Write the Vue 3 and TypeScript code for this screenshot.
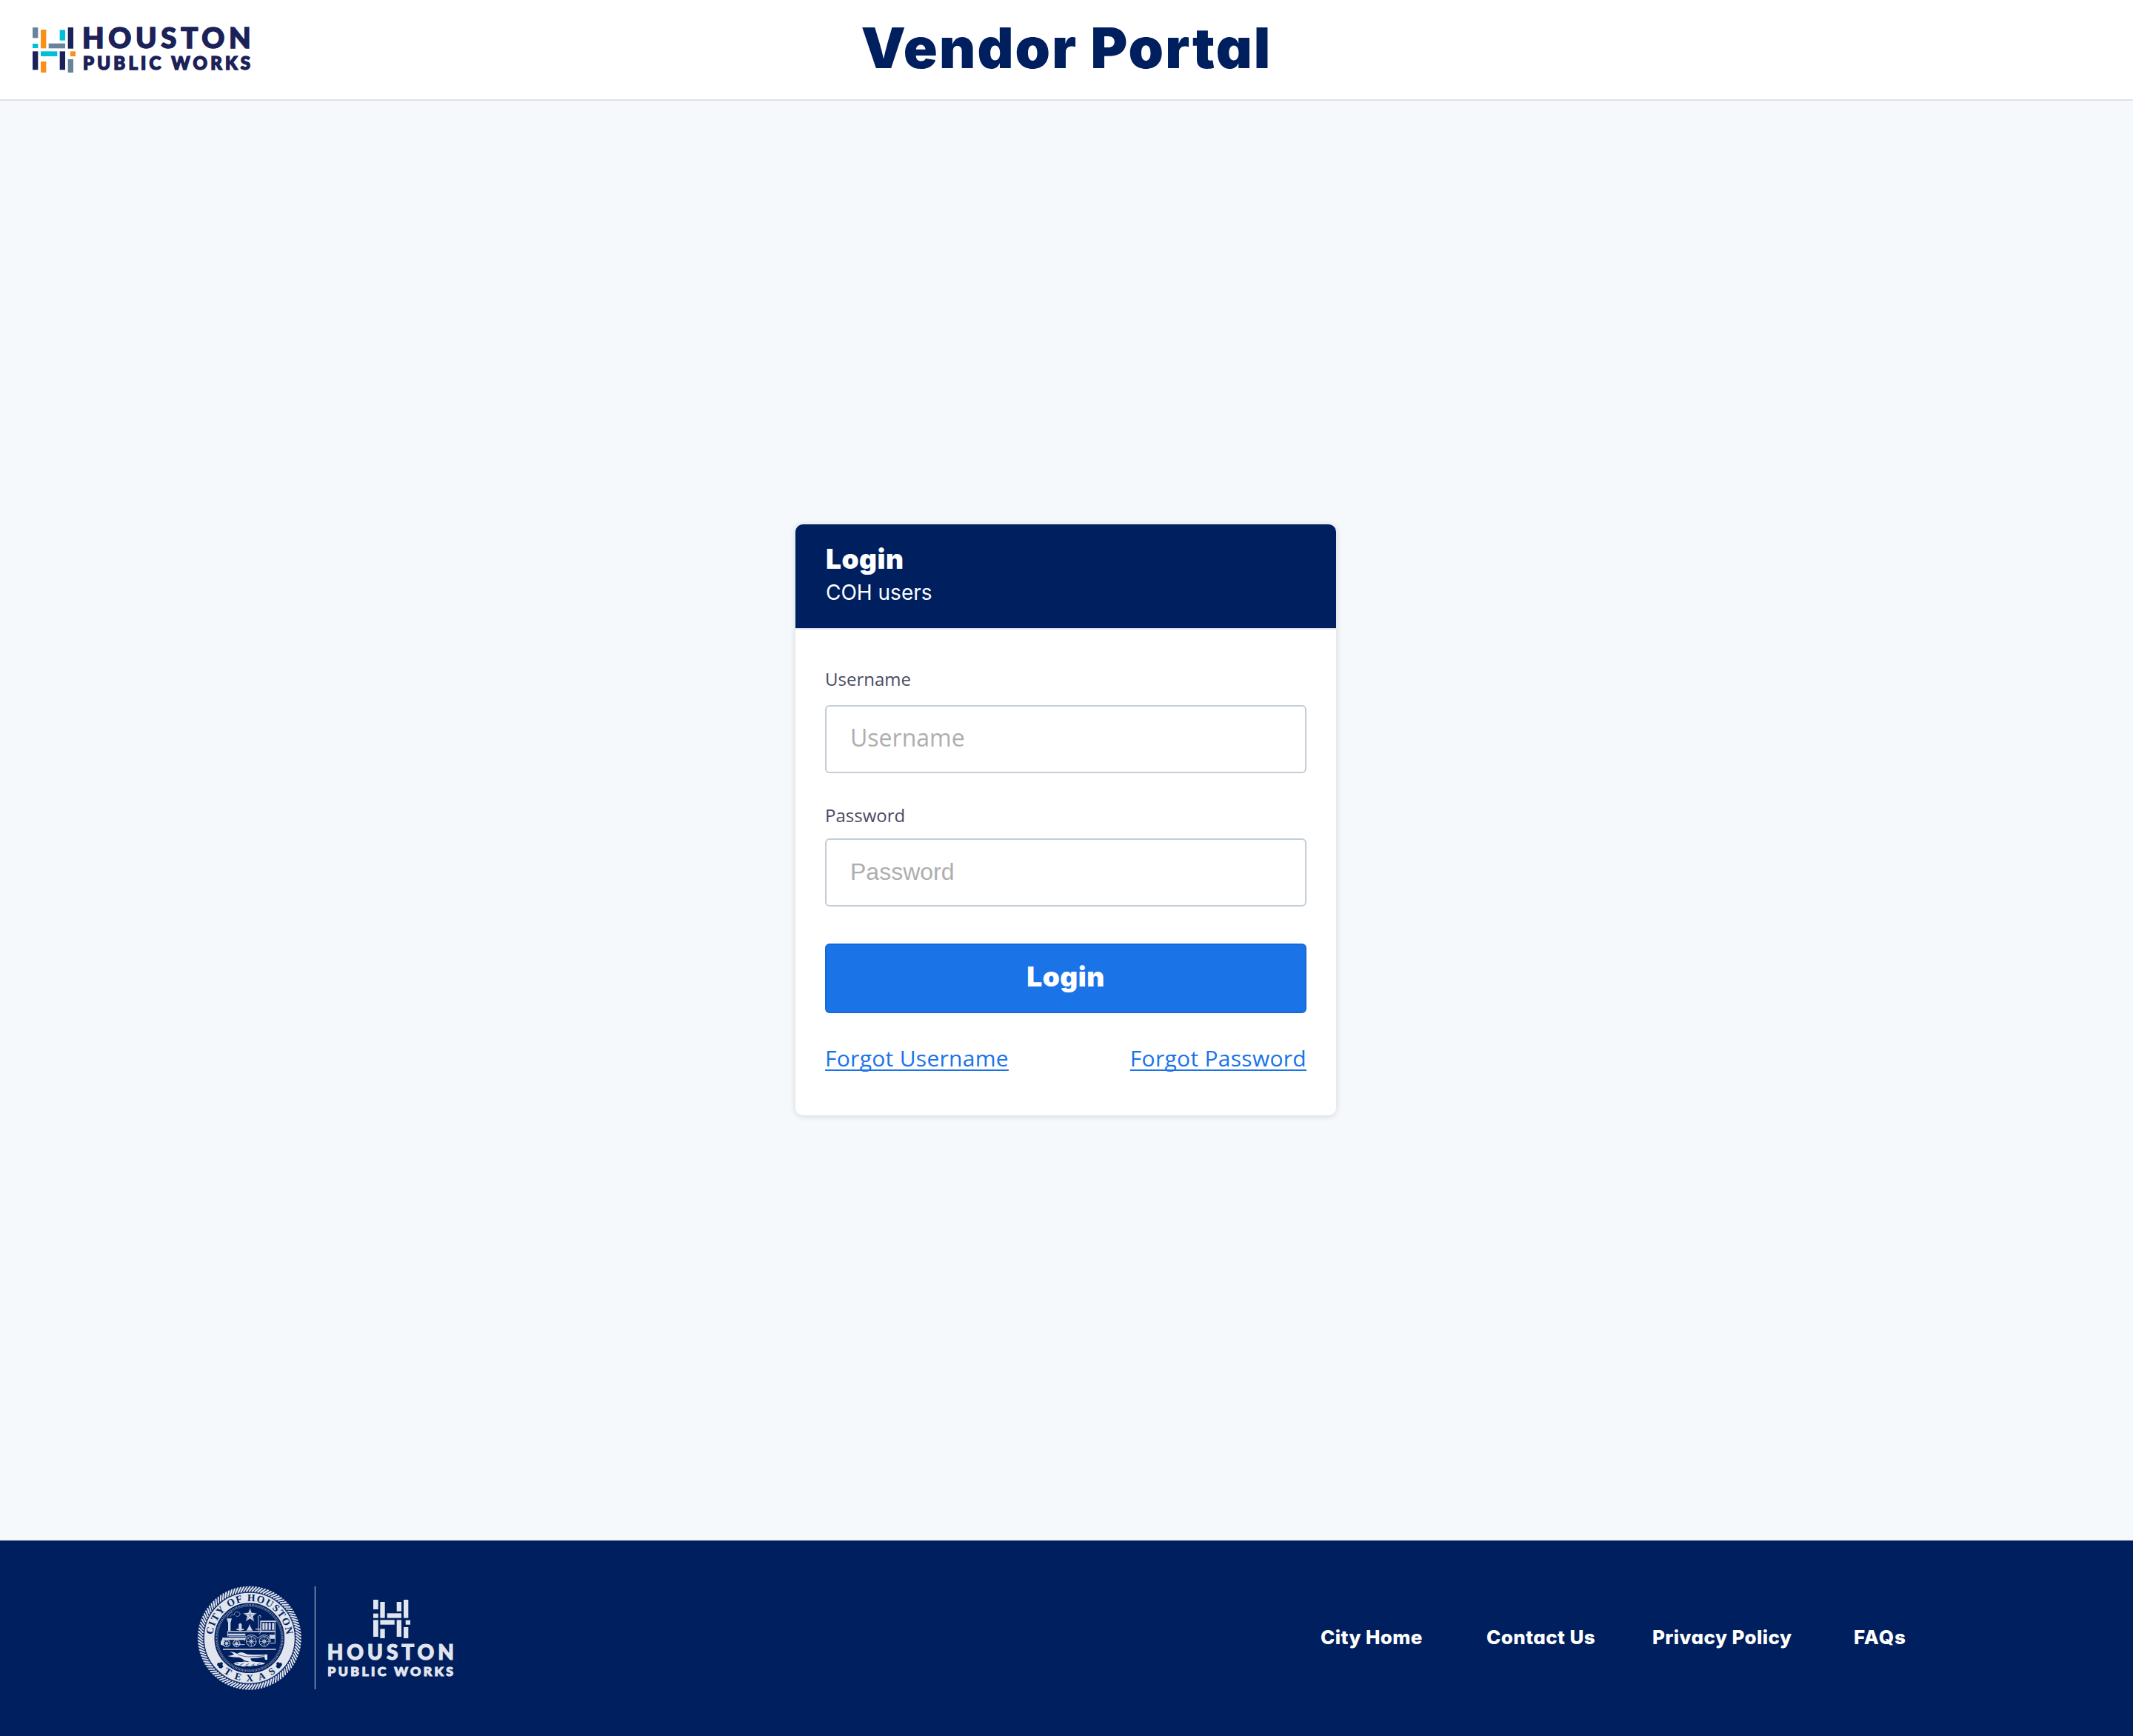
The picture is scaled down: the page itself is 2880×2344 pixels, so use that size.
<script setup lang="ts">
import { ref } from 'vue'

type Block = [x: number, y: number, w: number, h: number, fill: string]

const NAVY = '#1b2159'
const SLATE = '#68849b'
const TEAL = '#00bfd8'
const ORANGE = '#fb9019'
const PALE = '#e1e5ee'

const markBlocks: Block[] = [
  [42, 51, 22, 43, SLATE],
  [42, 117, 22, 18, TEAL],
  [75, 60, 22, 76, ORANGE],
  [152, 61, 22, 43, TEAL],
  [107, 116, 67, 20, SLATE],
  [185, 51, 22, 86, NAVY],
  [42, 148, 22, 75, NAVY],
  [75, 148, 67, 20, TEAL],
  [75, 189, 22, 45, ORANGE],
  [152, 148, 22, 75, NAVY],
  [195, 148, 21, 20, ORANGE],
  [185, 180, 22, 54, SLATE],
]

const footerBlocks: Block[] = [
  [762, 120, 20, 39, PALE],
  [762, 176, 20, 18, PALE],
  [790, 129, 19, 65, PALE],
  [857, 129, 19, 38, PALE],
  [885, 120, 19, 74, PALE],
  [818, 175, 58, 19, PALE],
  [762, 202, 20, 68, PALE],
  [790, 202, 58, 19, PALE],
  [790, 238, 19, 38, PALE],
  [857, 202, 19, 68, PALE],
  [893, 203, 19, 18, PALE],
  [885, 231, 19, 45, PALE],
]

const CX = 260.5
const CY = 275

// Point on a circle around the seal's centre; degrees run clockwise from the top.
function polar(r: number, deg: number): string {
  const a = (deg * Math.PI) / 180
  return `${(CX + r * Math.sin(a)).toFixed(2)} ${(CY - r * Math.cos(a)).toFixed(2)}`
}

const STRANDS = 104
const rope = Array.from({ length: STRANDS }, (_, i) => {
  const d = (i * 360) / STRANDS
  return `M${polar(190, d)}L${polar(207, d + 4)}`
}).join('')

const topArc = `M${polar(149, -85)}A149 149 0 0 1 ${polar(149, 87)}`
const bottomArc = `M${polar(176, 217)}A176 176 0 0 0 ${polar(176, 141)}`

const wheels = [
  { x: 268, y: 289, r: 20 },
  { x: 320, y: 289, r: 20 },
  { x: 168, y: 297, r: 14 },
  { x: 208, y: 297, r: 14 },
]

const username = ref('')
const password = ref('')
const links: string[] = ['City Home', 'Contact Us', 'Privacy Policy', 'FAQs']
</script>

<template>
  <div class="page">
    <header class="topbar">
      <svg class="brand" viewBox="42 0 930 260" role="img" aria-label="Houston Public Works">
        <rect v-for="(b, i) in markBlocks" :key="i" :x="b[0]" :y="b[1]" :width="b[2]" :height="b[3]" :fill="b[4]" />
        <g class="wordmark" :fill="NAVY" :stroke="NAVY" stroke-width="4.5">
          <text x="243" y="135" font-size="115" textLength="683">HOUSTON</text>
          <text x="246" y="222" font-size="72" textLength="678">PUBLIC WORKS</text>
        </g>
      </svg>
      <h1 class="title">Vendor Portal</h1>
    </header>

    <main class="main">
      <form class="card" @submit.prevent>
        <div class="card-head">
          <h2>Login</h2>
          <p>COH users</p>
        </div>
        <div class="card-body">
          <label for="username">Username</label>
          <input id="username" v-model="username" type="text" placeholder="Username" />
          <label for="password" class="second">Password</label>
          <input id="password" v-model="password" type="password" placeholder="Password" />
          <button type="submit">Login</button>
          <div class="help">
            <a href="#">Forgot Username</a>
            <a href="#">Forgot Password</a>
          </div>
        </div>
      </form>
    </main>

    <footer class="footer">
      <svg class="lockup" viewBox="48 63 1050 423" role="img" aria-label="City of Houston, Houston Public Works">
        <defs>
          <path id="seal-top" :d="topArc" />
          <path id="seal-bottom" :d="bottomArc" />
        </defs>
        <g fill="none" :stroke="PALE">
          <path :d="rope" stroke-width="6" stroke-linecap="round" />
          <circle :cx="CX" :cy="CY" r="209" stroke-width="1.2" opacity="0.5" />
          <circle :cx="CX" :cy="CY" r="187" stroke-width="1.2" opacity="0.5" />
          <circle :cx="CX" :cy="CY" r="162.5" stroke-width="41" />
          <circle :cx="CX" :cy="CY" r="134" stroke-width="7" stroke-dasharray="3.2 3.2" opacity="0.6" />
          <circle :cx="CX" :cy="CY" r="129" stroke-width="1.4" opacity="0.6" />
        </g>
        <g class="seal-text" fill="#001f5f">
          <text font-size="41"><textPath href="#seal-top" textLength="442">CITY OF HOUSTON</textPath></text>
          <text font-size="40"><textPath href="#seal-bottom" textLength="228">TEXAS</textPath></text>
          <path d="M132 375l8 1 7-4 6 5-2 8 4 6-8 7-9-1-4-7-5-5zM390 375l-8 1-7-4-6 5 2 8-4 6 8 7 9-1 4-7 5-5z" />
        </g>

        <!-- star and locomotive -->
        <path :fill="PALE" d="M263 153l6 20 22 1-17 13 6 22-17-13-18 12 7-21-18-13 22-1z" />
        <path d="M263 153v30l28-9M263 183l17 26M263 183l-18 25M263 183l-29-9" fill="none" stroke="#001f5f" stroke-width="1.5" />
        <g :fill="PALE" opacity="0.92">
          <path d="M168 196h21l-5 18v32h-10v-32z" />
          <path d="M217 245v-25q6-11 12 0v25zM208 238h29v5h-29zM248 245l9-15 4-12 4 12 9 15zM285 237h22v4h-22z" />
          <path d="M172 247h134v4H172zM172 257h72v8h-72zM304 205h64v5h-64zM304 210h5v38h-5zM313 214h9v28h-9zM325 214h9v28h-9zM338 214h9v28h-9zM352 214h9v28h-9zM308 245h56v6h-56zM150 274h96l-4 9h-90zM340 262h24v16h-20z" />
          <path d="M153 319h215v4H153zM144 290l10-16 4 4-2 28-12-4z" />
        </g>
        <g fill="none" :stroke="PALE" stroke-width="2.6">
          <path d="M172 247v22M306 247q-1 10-8 14M364 208v88h-22M297 246v-46q-6-14 6-17 7 3 1 10M241 287q3-24 27-24 18 0 27 14 10-14 27-14 20 0 24 28M196 302h46M176 268h70" />
          <path d="M182 190q4-13 17-9 1-15 14-11 14 2 7 14-8 8-16 1M170 193q4-18 22-23" opacity="0.65" />
          <g v-for="(w, i) in wheels" :key="i">
            <circle :cx="w.x" :cy="w.y" :r="w.r" />
            <circle :cx="w.x" :cy="w.y" :r="w.r * 0.3" />
            <path
              :d="`M${w.x - w.r} ${w.y}h${w.r * 2}M${w.x} ${w.y - w.r}v${w.r * 2}M${w.x - w.r * 0.7} ${w.y - w.r * 0.7}l${w.r * 1.4} ${w.r * 1.4}M${w.x + w.r * 0.7} ${w.y - w.r * 0.7}l${-w.r * 1.4} ${w.r * 1.4}`"
              stroke-width="1.8"
            />
          </g>
        </g>

        <!-- plow over the furrow -->
        <g :fill="PALE">
          <path d="M180 331q18-1 31 8 9-8 22-5l20 7q42 3 80 0v22h-9l-3-12q-30 7-57 7l8 16-32-8q-10-10-22-13-24 2-46-5 16-1 26-6-6-7-18-11z" />
          <path d="M196 379q14-9 30-6 15-4 27-1 17-5 34 0 19-1 38 5-9 8-24 6-10 7-23 3-14 7-27 2-16 6-28-1-17 2-27-8z" />
        </g>
        <path
          d="M214 343q22 6 36 8 38 1 72-4M205 381l12-4m6 7 14-6m7 8 15-7m9 8 13-7m10 4 13-6"
          fill="none"
          stroke="#001f5f"
          stroke-width="2"
        />

        <rect x="524.5" y="66" width="3.5" height="417" fill="#a9b6cd" />
        <rect v-for="(b, i) in footerBlocks" :key="i" :x="b[0]" :y="b[1]" :width="b[2]" :height="b[3]" :fill="b[4]" />
        <g class="wordmark" :fill="PALE" :stroke="PALE" stroke-width="3.4">
          <text x="575" y="363" font-size="84" textLength="514">HOUSTON</text>
          <text x="577" y="429" font-size="53" textLength="509">PUBLIC WORKS</text>
        </g>
      </svg>
      <nav class="links">
        <a v-for="l in links" :key="l" href="#">{{ l }}</a>
      </nav>
    </footer>
  </div>
</template>

<style>
body {
  background: #f5f9fc;
}
</style>

<style scoped>
.page {
  box-sizing: border-box;
  display: flex;
  flex-direction: column;
  height: 2344px;
  background: #f5f9fc;
  font-family: 'Open Sans', sans-serif;
}
.page * {
  box-sizing: border-box;
}
.topbar {
  display: grid;
  grid-template-columns: 1fr auto 1fr;
  align-items: start;
  height: 136px;
  padding: 20px 44px 0;
  background: #fff;
  border-bottom: 2px solid #dfe3e9;
}
.brand {
  width: 310px;
  height: 86.67px;
}
.wordmark {
  font-family: Lato, sans-serif;
  font-weight: 900;
}
.seal-text {
  font-family: 'Liberation Serif', serif;
  font-weight: 700;
}
.title {
  margin: 0;
  color: #001f5f;
  font: 900 76px/88px Inter, sans-serif;
  font-feature-settings: 'cv11';
  letter-spacing: 2.1px;
}
.main {
  flex: 1;
  display: flex;
  justify-content: center;
  align-items: flex-start;
  padding-top: 572px;
}
.card {
  width: 730px;
  height: 798px;
  margin-right: 2px;
  overflow: hidden;
  background: #fff;
  border-radius: 10px;
  box-shadow: 0 1px 8px rgba(20, 30, 50, 0.16);
}
.card-head {
  height: 142px;
  padding: 24px 40px 0 41px;
  color: #fff;
  background: #001f5f;
  border-bottom: 2px solid #dfe3e9;
}
.card-head h2 {
  margin: 0;
  font: 900 37px/45px Inter, sans-serif;
  font-feature-settings: 'cv11';
  letter-spacing: 0.5px;
}
.card-head p {
  margin: 3px 0 0;
  font: 400 28px/40px Inter, sans-serif;
}
.card-body {
  display: flex;
  flex-direction: column;
  padding: 51px 40px 0;
}
label {
  margin-bottom: 19px;
  color: #4a4a62;
  font-size: 24px;
  line-height: 32px;
}
label.second {
  margin: 41px 0 15px;
}
input {
  width: 100%;
  height: 92px;
  padding: 0 32px 5px;
  border: 2px solid #c3cdd8;
  border-radius: 6px;
  background: #fff;
  font: 32px 'Open Sans', sans-serif;
}
input[type='password'] {
  padding-bottom: 2px;
  font-family: 'Liberation Sans', sans-serif;
}
input::placeholder {
  color: #aeaeae;
  opacity: 1;
}
button {
  height: 94px;
  margin-top: 50px;
  padding: 0 0 5px;
  border: 2px solid #1868d8;
  border-radius: 6px;
  color: #fff;
  background: #1b73e8;
  font: 900 37px Inter, sans-serif;
  font-feature-settings: 'cv11';
  letter-spacing: 0.5px;
}
.help {
  display: flex;
  justify-content: space-between;
  margin-top: 41px;
}
.help a {
  color: #1b73e8;
  font-size: 30px;
  line-height: 40px;
  letter-spacing: 0.29px;
  text-decoration: underline;
  text-decoration-thickness: 2px;
  text-underline-offset: 4px;
  text-decoration-skip-ink: none;
}
.footer {
  display: flex;
  justify-content: space-between;
  height: 264px;
  padding: 61px 304px 0 266px;
  background: #001f5f;
}
.lockup {
  width: 350px;
  height: 141px;
}
.links {
  display: grid;
  grid-template-columns: 224px 224px 272px 73px;
  align-items: start;
  padding-top: 53px;
}
.links a {
  color: #fff;
  font: 800 26px/34px Inter, sans-serif;
  font-feature-settings: 'cv11';
  letter-spacing: 0.4px;
  white-space: nowrap;
  text-decoration: none;
}
.links a:last-child {
  letter-spacing: 1px;
}
</style>
